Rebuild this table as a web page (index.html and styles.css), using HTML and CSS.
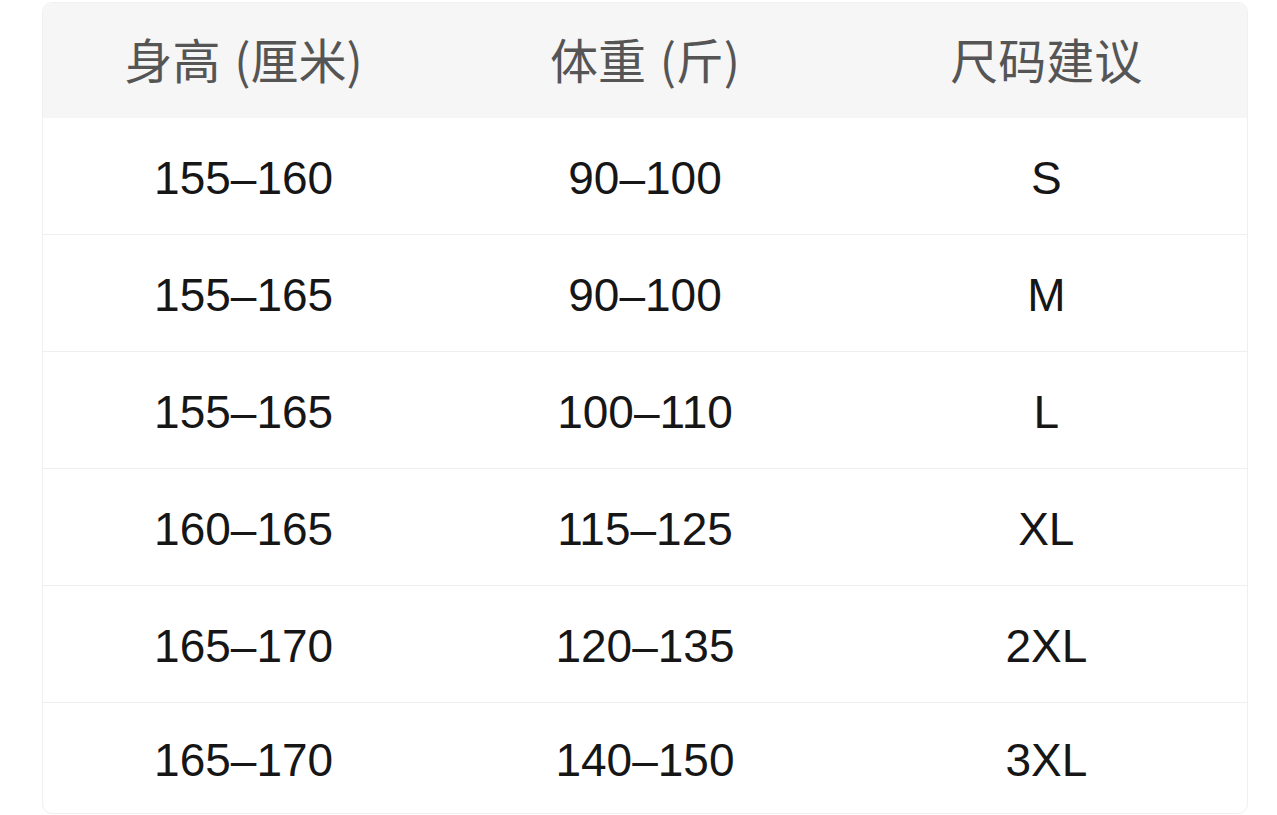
FILE: index.html
```html
<!DOCTYPE html>
<html lang="zh">
<head>
<meta charset="utf-8">
<link rel="stylesheet" href="styles.css">
</head>
<body>
<div class="card">
  <div class="row head">
    <div class="cell">身高 (厘米)</div>
    <div class="cell">体重 (斤)</div>
    <div class="cell">尺码建议</div>
  </div>
  <div class="row"><div class="cell">155–160</div><div class="cell">90–100</div><div class="cell">S</div></div>
  <div class="row"><div class="cell">155–165</div><div class="cell">90–100</div><div class="cell">M</div></div>
  <div class="row"><div class="cell">155–165</div><div class="cell">100–110</div><div class="cell">L</div></div>
  <div class="row"><div class="cell">160–165</div><div class="cell">115–125</div><div class="cell">XL</div></div>
  <div class="row"><div class="cell">165–170</div><div class="cell">120–135</div><div class="cell">2XL</div></div>
  <div class="row last"><div class="cell">165–170</div><div class="cell">140–150</div><div class="cell">3XL</div></div>
</div>
</body>
</html>
```
FILE: styles.css
```css
html, body {
  margin: 0;
  padding: 0;
  background: #ffffff;
}
body {
  padding: 2px 0 0 42px;
  font-family: "Liberation Sans", "Noto Sans CJK SC", sans-serif;
}
.card {
  width: 1206px;
  box-sizing: border-box;
  border: 1px solid #f0f0f0;
  border-radius: 10px;
  overflow: hidden;
  background: #fff;
}
.row {
  display: grid;
  grid-template-columns: 1fr 1fr 1fr;
  height: 117px;
  box-sizing: border-box;
  border-bottom: 1px solid #efefef;
  align-items: center;
}
.row.head {
  height: 115px;
  background: #f6f6f6;
  border-bottom: none;
}
.row.last {
  border-bottom: none;
  height: 110px;
}
.cell {
  text-align: center;
  font-size: 46px;
  color: #161616;
  line-height: 1;
  padding-top: 4px;
}
.head .cell {
  font-family: "Noto Sans CJK SC", sans-serif;
  font-size: 48px;
  color: #555555;
  padding-top: 0;
  padding-bottom: 6px;
  word-spacing: 3px;
}
```
